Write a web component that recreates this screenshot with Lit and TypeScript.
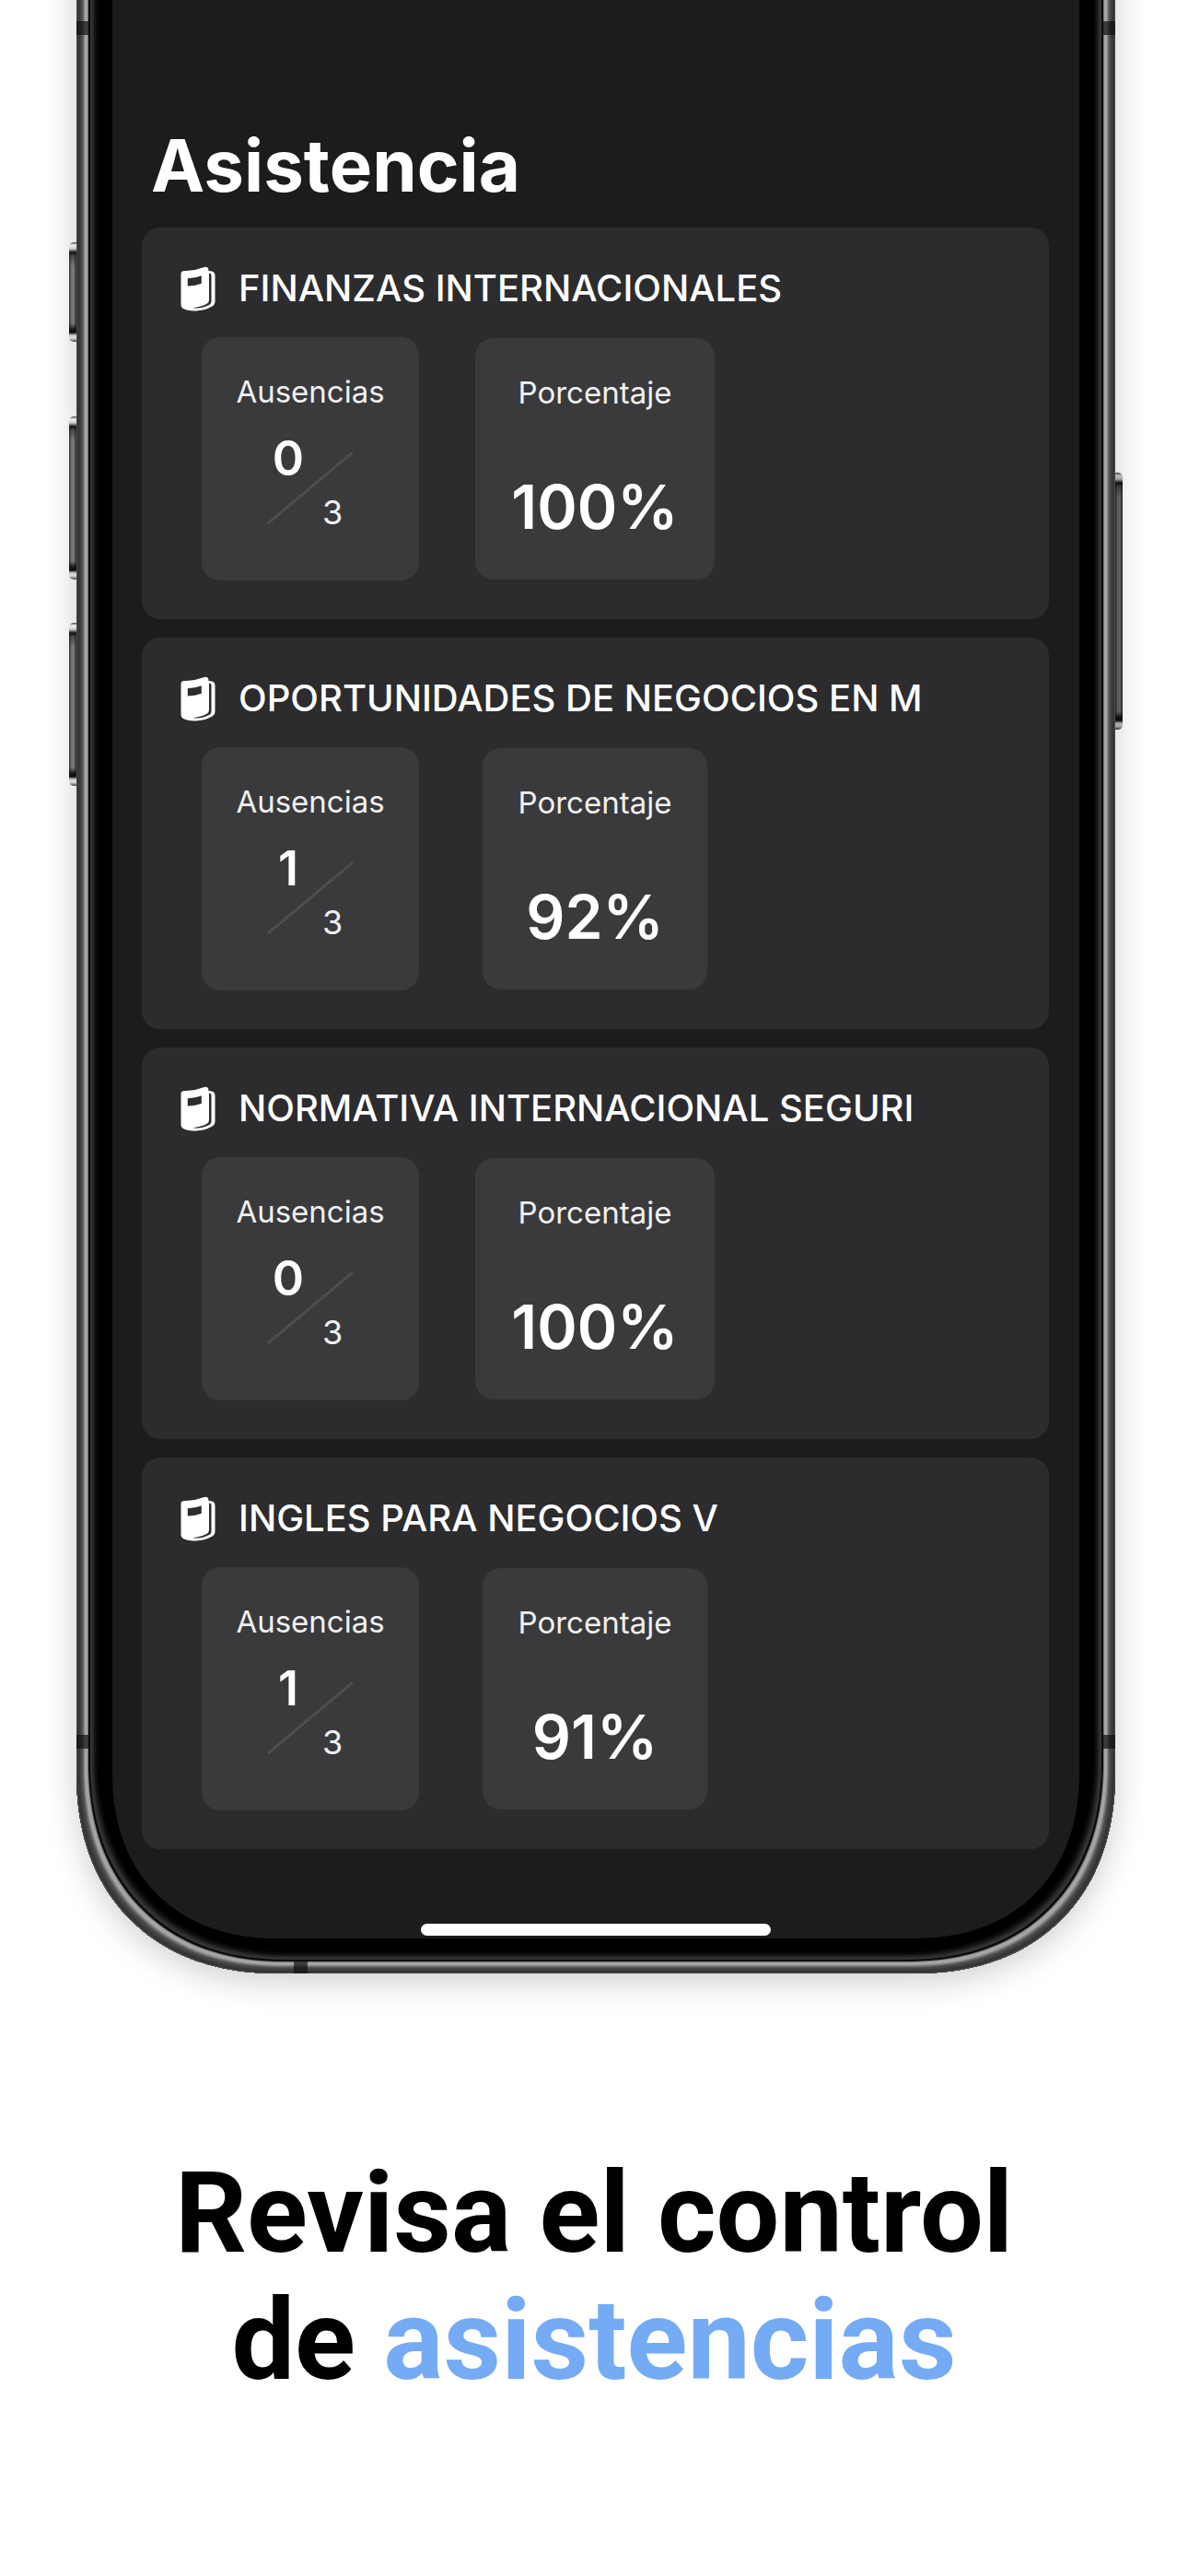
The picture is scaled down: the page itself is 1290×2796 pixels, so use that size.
import { LitElement, html, css, svg } from "lit";
import { customElement, property } from "lit/decorators.js";

interface Course {
  name: string;
  absences: number;
  limit: number;
  percent: number;
}

const COURSES: Course[] = [
  { name: "FINANZAS INTERNACIONALES", absences: 0, limit: 3, percent: 100 },
  { name: "OPORTUNIDADES DE NEGOCIOS EN M", absences: 1, limit: 3, percent: 92 },
  { name: "NORMATIVA INTERNACIONAL SEGURI", absences: 0, limit: 3, percent: 100 },
  { name: "INGLES PARA NEGOCIOS V", absences: 1, limit: 3, percent: 91 },
];

const bookIcon = svg`
  <path d="M0.5 8 Q0.5 5.5 3.5 5 Q14 5.5 24 1.5 Q29 -0.500 30.200 2.500 L30.500 5 L33 5.300 Q37.500 6 37.500 10 V38 Q37.500 42 34 43.800 Q22 50.500 7 47.500 Q0.5 46 0.5 42 Z" fill="#fff"/>
  <path d="M7.800 13.200 Q16 13 22.800 10.200 V18.800 Q16 21.300 7.800 21.500 Z" fill="#2c2c2e"/>
  <path d="M31 7.500 Q33.500 7.500 33.500 10.500 V38.500 Q33.500 40.500 31.500 41.800 Q24 46.300 13.500 45.300 Q24 43.500 29 40.500 Q31 39 31 36.500 Z" fill="#2c2c2e"/>
`;

@customElement("course-card")
export class CourseCard extends LitElement {
  @property({ attribute: false }) course!: Course;

  static styles = css`
    :host {
      display: block;
    }
    .card {
      box-sizing: border-box;
      height: 425px;
      padding: 36px 42px 0;
      border-radius: 20px;
      background: #2c2c2e;
      color: #fff;
    }
    .heading {
      display: flex;
      align-items: center;
      gap: 25px;
      height: 60px;
    }
    .book {
      flex: none;
      width: 38px;
      height: 49px;
    }
    .name {
      margin: 0;
      font-size: 40px;
      font-weight: 500;
      line-height: 60px;
      white-space: nowrap;
    }
    .tiles {
      display: grid;
      grid-template-columns: 236px 258px;
      gap: 62px;
      align-items: center;
      justify-items: center;
      margin: 23px 0 0 23px;
    }
    .tile {
      box-sizing: border-box;
      display: flex;
      flex-direction: column;
      align-items: center;
      border-radius: 20px;
      padding: 36px 39px 0;
      background: #3a3a3c;
    }
    .absences {
      width: 236px;
      height: 264px;
    }
    .percentage {
      height: 262px;
    }
    .label {
      margin: 0;
      font-size: 33px;
      font-weight: 400;
      line-height: 46px;
      color: #f0f0f0;
    }
    .fraction {
      display: grid;
      grid-template-columns: 48px 48px;
      grid-template-rows: 52px 64px;
      margin-top: 24px;
      justify-items: center;
      align-items: center;
    }
    .slash {
      grid-area: 1 / 1 / 3 / 3;
      width: 96px;
      height: 84px;
    }
    .count {
      grid-area: 1 / 1;
      font-size: 52px;
      font-weight: 600;
      line-height: 52px;
    }
    .limit {
      grid-area: 2 / 2;
      font-size: 36px;
      line-height: 52px;
      color: #f0f0f0;
    }
    .value {
      margin: 61px 0 0;
      font-size: 66px;
      font-weight: 600;
      line-height: 80px;
    }
  `;

  render() {
    const c = this.course;
    return html`
      <article class="card">
        <header class="heading">
          <svg class="book" viewBox="0 0 38 49" aria-hidden="true">${bookIcon}</svg>
          <h2 class="name">${c.name}</h2>
        </header>
        <div class="tiles">
          <section class="tile absences">
            <h3 class="label">Ausencias</h3>
            <div class="fraction">
              <svg class="slash" viewBox="0 0 96 84" aria-hidden="true">
                <path d="M2 80L94 3" stroke="#4d4d4f" stroke-width="3" />
              </svg>
              <span class="count">${c.absences}</span>
              <span class="limit">${c.limit}</span>
            </div>
          </section>
          <section class="tile percentage">
            <h3 class="label">Porcentaje</h3>
            <p class="value">${c.percent}%</p>
          </section>
        </div>
      </article>
    `;
  }
}

@customElement("app-root")
export class AppRoot extends LitElement {
  static styles = css`
    :host {
      display: block;
      min-height: 100vh;
      background: #fff;
      font-family: Inter, "Liberation Sans", sans-serif;
    }
    .stage {
      overflow: hidden;
      padding: 0 79px 100px 83px;
    }
    /* The top of the device runs off the page. */
    .phone {
      position: relative;
      margin-top: -240px;
      padding: 39px 39px 38px;
      border-radius: 200px;
      background: #000;
      box-shadow:
        inset 0 0 0 1px #4a4b4c,
        inset 0 0 0 2px #303031,
        inset 0 0 0 4px #38393a,
        inset 0 0 0 6px #454647,
        inset 0 0 0 7px #555657,
        inset 0 0 0 8px #6c6d6e,
        inset 0 0 0 9px #848585,
        inset 0 0 0 12px #a4a4a4,
        inset 0 0 0 13px #777,
        inset 0 0 0 15px #0c0c0c,
        inset 0 0 0 17px #333435,
        inset 0 0 0 19px #262727,
        inset 0 0 0 21px #141414,
        inset 0 0 0 23px #080808,
        0 8px 36px rgba(0, 0, 0, 0.2);
    }
    .screen {
      display: flex;
      flex-direction: column;
      border-radius: 162px;
      padding: 329px 33px 3px 32px;
      background: #1c1c1e;
      color: #fff;
    }
    /* Continuous-curvature corners where the browser can draw them. */
    @supports (corner-shape: superellipse(1.15)) {
      .phone {
        border-radius: 218px;
        corner-shape: superellipse(1.15);
      }
      .screen {
        border-radius: 180px;
        corner-shape: superellipse(1.15);
      }
    }
    .title {
      margin: 0 0 15px;
      padding-left: 10px;
      font-size: 78px;
      font-weight: 700;
      line-height: 104px;
    }
    .list {
      display: flex;
      flex-direction: column;
      gap: 20px;
    }
    .home {
      align-self: center;
      width: 380px;
      height: 13px;
      margin-top: 81px;
      border-radius: 7px;
      background: #fff;
    }
    .band {
      position: absolute;
      width: 13px;
      height: 15px;
      background: rgba(15, 15, 15, 0.7);
    }
    .band-tl {
      left: 0;
      top: 263px;
    }
    .band-tr {
      right: 0;
      top: 263px;
    }
    .band-bl {
      left: 0;
      bottom: 244px;
    }
    .band-br {
      right: 0;
      bottom: 244px;
    }
    .band-foot {
      left: 236px;
      bottom: 0;
      width: 15px;
      height: 13px;
    }
    .key {
      position: absolute;
      width: 8px;
      background:
        linear-gradient(
          #444 0,
          #eee 3px,
          #ccc 7px,
          #111 11px,
          #2228 15px,
          #0000 26px,
          #0000 calc(100% - 20px),
          #111 calc(100% - 13px),
          #111 calc(100% - 10px),
          #ccc calc(100% - 7px),
          #ddd calc(100% - 4px),
          #444 100%
        ),
        linear-gradient(90deg, #333, #777a7a 3px, #777a7a 5px, #2a2a2a 8px);
    }
    .key-action {
      left: -8px;
      top: 503px;
      height: 108px;
      border-radius: 5px 0 0 5px;
    }
    .key-up {
      left: -8px;
      top: 692px;
      height: 177px;
      border-radius: 5px 0 0 5px;
    }
    .key-down {
      left: -8px;
      top: 916px;
      height: 177px;
      border-radius: 5px 0 0 5px;
    }
    .key-side {
      right: -8px;
      top: 753px;
      height: 279px;
      border-radius: 0 5px 5px 0;
      filter: brightness(0.8);
    }
    .caption {
      margin: 192px 0 0;
      padding-right: 4px;
      font-family: Roboto, "Liberation Sans", sans-serif;
      font-size: 122px;
      font-weight: 700;
      line-height: 138px;
      text-align: center;
      color: #000;
    }
    .line {
      display: block;
    }
    .accent {
      color: #75abf4;
    }
  `;

  render() {
    return html`
      <div class="stage">
        <div class="phone">
          <span class="band band-tl"></span>
          <span class="band band-tr"></span>
          <span class="band band-bl"></span>
          <span class="band band-br"></span>
          <span class="band band-foot"></span>
          <span class="key key-action"></span>
          <span class="key key-up"></span>
          <span class="key key-down"></span>
          <span class="key key-side"></span>
          <main class="screen">
            <h1 class="title">Asistencia</h1>
            <div class="list">
              ${COURSES.map((c) => html`<course-card .course=${c}></course-card>`)}
            </div>
            <div class="home"></div>
          </main>
        </div>
        <p class="caption">
          <span class="line">Revisa el control</span>
          <span class="line">de <span class="accent">asistencias</span></span>
        </p>
      </div>
    `;
  }
}
